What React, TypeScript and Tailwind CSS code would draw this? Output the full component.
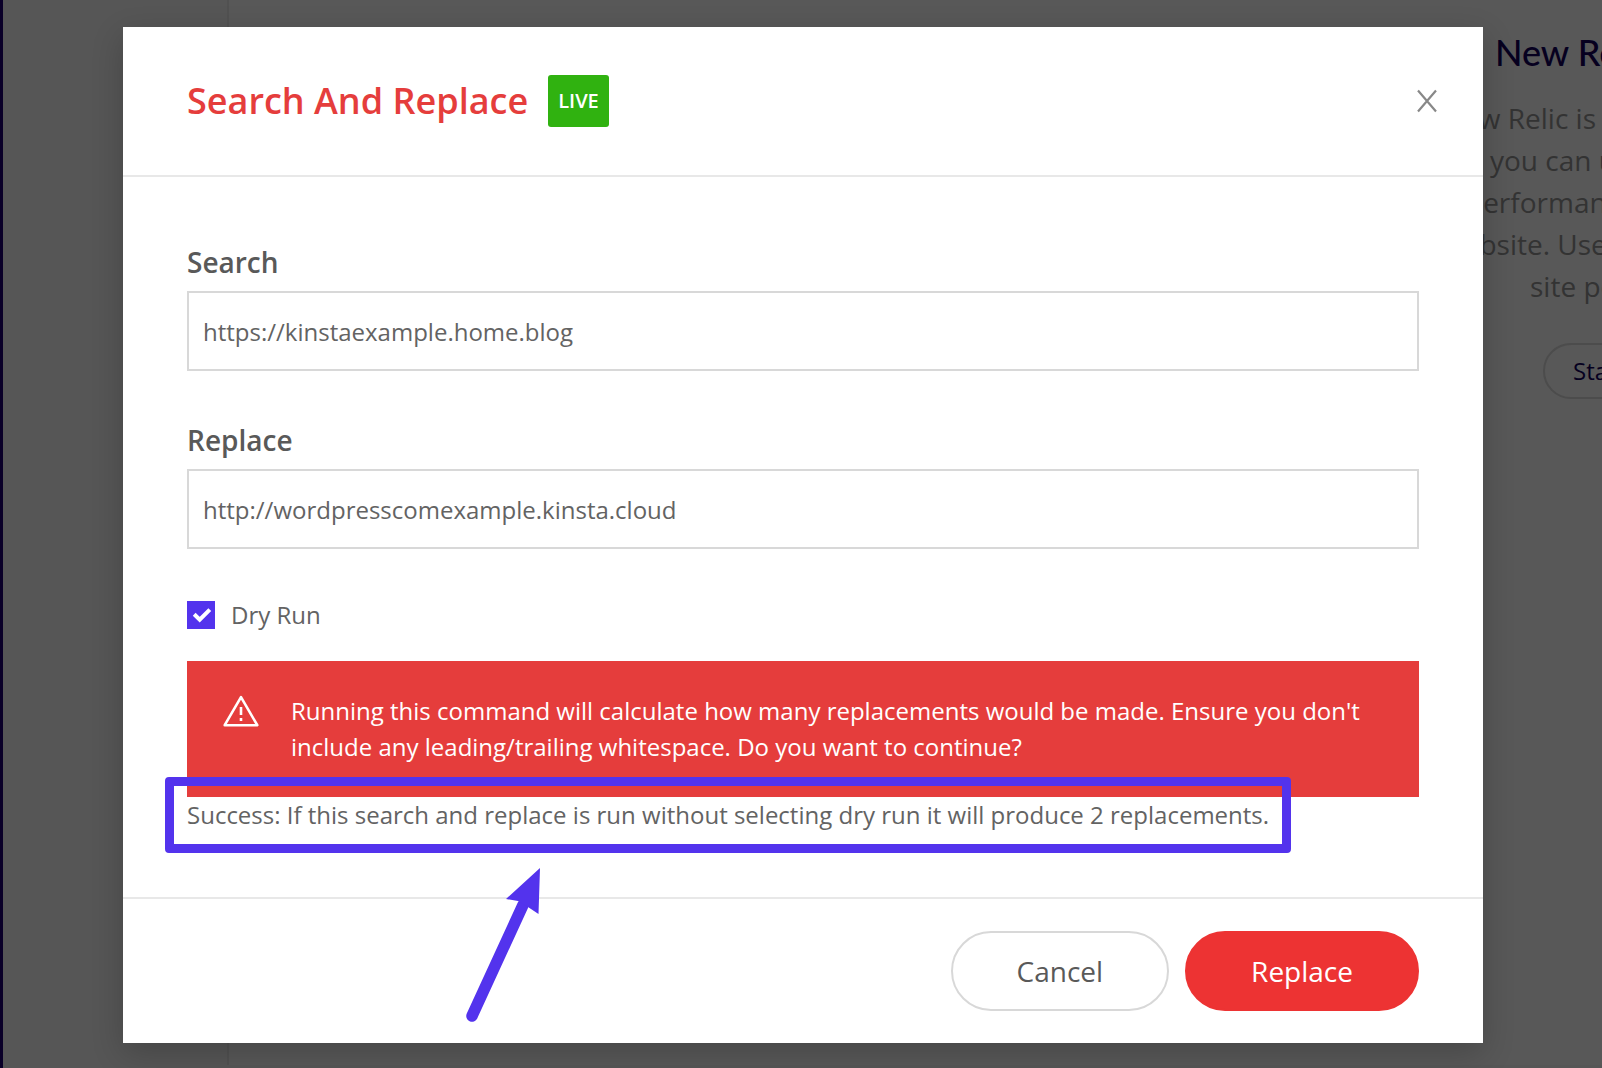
import React from "react";

function Backdrop() {
  return (
    <div aria-hidden="true" className="flex h-screen bg-[#565656]">
      <div className="w-[3px] shrink-0 bg-[#0a0028]" />
      <div className="w-56 shrink-0" />
      <div className="mb-[3px] flex grow justify-end border-l-2 border-[#515151] bg-[#585858]">
        <section className="w-[160px] shrink-0 whitespace-nowrap pt-[31px] text-[28px] leading-[42px] text-[#333333]">
          <h2 className="pl-[53px] font-['Lato'] text-[36px] leading-[42px] font-medium text-[#06001f]">
            New Relic
          </h2>
          <div className="mt-6">
            <p>New Relic is a</p>
            <p className="pl-12">you can use</p>
            <p className="pl-6">performance</p>
            <p>website. Use</p>
            <p className="pl-[88px]">site performance</p>
          </div>
          <button
            type="button"
            tabIndex={-1}
            className="mt-9 ml-[101px] h-14 rounded-full border-2 border-[#4c4c4c] px-7 text-2xl text-[#06001f]"
          >
            Start
          </button>
        </section>
      </div>
    </div>
  );
}

function WarningIcon() {
  return (
    <svg viewBox="0 0 36 32" className="h-8 w-9 shrink-0" fill="none" stroke="white" aria-hidden="true">
      <path d="M18 2.2 34.3 30.2H1.7Z" strokeWidth="2.6" strokeLinejoin="round" />
      <path d="M18 12V20M18 23V26" strokeWidth="2.6" />
    </svg>
  );
}

function Arrow() {
  return (
    <svg
      viewBox="0 0 76 156"
      className="pointer-events-none absolute top-[71px] left-[279px] h-[156px] w-[76px]"
      aria-hidden="true"
    >
      <path d="M6 148 57 37" stroke="#5333ed" strokeWidth="11.5" strokeLinecap="round" />
      <path d="M74 0 40 31 52 33 62 39 72.500 46Z" fill="#5333ed" />
    </svg>
  );
}

function Field({ id, label, value }: { id: string; label: string; value: string }) {
  return (
    <div>
      <label htmlFor={id} className="mb-2 block text-[28px] leading-[42px] font-semibold">
        {label}
      </label>
      <input
        id={id}
        type="text"
        defaultValue={value}
        className="h-20 w-full border-2 border-[#d8d8d8] bg-white px-3.5 text-2xl text-[#636363] outline-none"
      />
    </div>
  );
}

export default function App() {
  return (
    <div className="relative overflow-hidden font-['Open_Sans','Noto_Sans',sans-serif]">
      <Backdrop />
      <div className="absolute inset-0 pt-[27px] pr-[119px] pl-[123px]">
        <div
          role="dialog"
          aria-labelledby="dialog-title"
          className="bg-white text-[#595959] shadow-[0_10px_30px_rgba(0,0,0,0.2)]"
        >
          <header className="flex items-center border-b-2 border-[#e8e8e8] py-12 pr-[45px] pl-16">
            <h1 id="dialog-title" className="text-[36px] leading-[52px] font-semibold text-[#e53d3c]">
              Search And Replace
            </h1>
            <span className="ml-5 rounded-[3px] bg-[#30b210] px-2.5 text-xl leading-[52px] font-semibold text-white">
              LIVE
            </span>
            <button type="button" aria-label="Close" className="ml-auto">
              <svg viewBox="0 0 22 24" className="h-6 w-[22px]" fill="none" stroke="#888888" strokeWidth="2.2">
                <path d="M2 1.500 20 22.500M20 1.500 2 22.500" />
              </svg>
            </button>
          </header>

          <div className="px-16 py-16">
            <div className="flex flex-col gap-12">
              <Field id="search" label="Search" value="https://kinstaexample.home.blog" />
              <Field id="replace" label="Replace" value="http://wordpresscomexample.kinsta.cloud" />
              <label className="flex items-center text-2xl leading-9 text-[#636363]">
                <span className="relative mr-4 block size-7">
                  <input type="checkbox" defaultChecked className="block size-7 appearance-none bg-[#5333ed]" />
                  <svg
                    viewBox="0 0 28 28"
                    className="pointer-events-none absolute inset-0 size-7"
                    fill="none"
                    stroke="white"
                    strokeWidth="4"
                    aria-hidden="true"
                  >
                    <path d="M7.200 13.300 12.700 18.700 22.800 8.600" />
                  </svg>
                </span>
                Dry Run
              </label>
            </div>

            <div role="alert" className="mt-7 flex bg-[#e53d3c] py-8 pr-9 pl-9 text-white">
              <div className="mt-0.5 mr-8">
                <WarningIcon />
              </div>
              <p className="text-2xl leading-9 font-medium">
                Running this command will calculate how many replacements would be made. Ensure you don't include any
                leading/trailing whitespace. Do you want to continue?
              </p>
            </div>

            <div className="relative w-fit">
              <p className="text-2xl leading-9 text-[#636363]">
                Success: If this search and replace is run without selecting dry run it will produce 2 replacements.
              </p>
              <div className="pointer-events-none absolute -inset-x-[22px] -inset-y-5 rounded border-[9px] border-[#5333ed]" />
              <Arrow />
            </div>
          </div>

          <footer className="flex justify-end gap-4 border-t-2 border-[#e8e8e8] px-16 py-8 text-[28px]">
            <button type="button" className="h-20 rounded-full border-2 border-[#d8d8d8] px-16">
              Cancel
            </button>
            <button
              type="button"
              className="h-20 rounded-full border-2 border-[#ed3333] bg-[#ed3333] px-16 font-medium text-white"
            >
              Replace
            </button>
          </footer>
        </div>
      </div>
    </div>
  );
}
